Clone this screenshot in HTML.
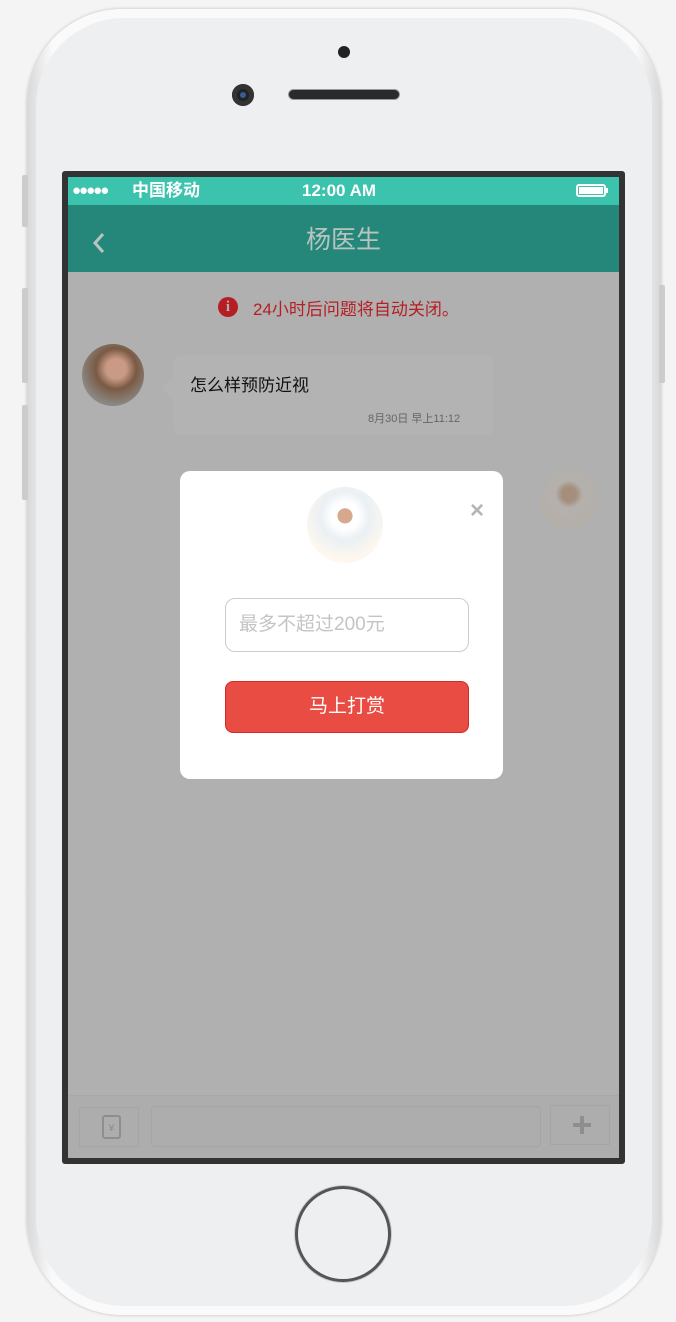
<!DOCTYPE html><html><head><meta charset="utf-8"><style>
body{margin:0;width:676px;height:1322px;background:#f4f4f4;position:relative;overflow:hidden;font-family:"Liberation Sans","Noto Sans CJK SC",sans-serif}
.a{position:absolute}
</style></head><body>
<div class="a" style="left:27px;top:9px;width:634px;height:1306px;border-radius:95px;background:linear-gradient(90deg,#d8d8da,#fafafa 4%,#fafafa 96%,#d8d8da);box-shadow:0 0 3px #bbb"></div>
<div class="a" style="left:36px;top:18px;width:616px;height:1288px;border-radius:88px;background:#eeeff1"></div>
<div class="a" style="left:22px;top:175px;width:6px;height:52px;background:#ccc;border-radius:2px"></div>
<div class="a" style="left:22px;top:288px;width:6px;height:95px;background:#ccc;border-radius:2px"></div>
<div class="a" style="left:22px;top:405px;width:6px;height:95px;background:#ccc;border-radius:2px"></div>
<div class="a" style="left:659px;top:285px;width:6px;height:98px;background:#ccc;border-radius:2px"></div>
<div class="a" style="left:338px;top:46px;width:12px;height:12px;border-radius:50%;background:#222"></div>
<div class="a" style="left:232px;top:84px;width:22px;height:22px;border-radius:50%;background:#222;box-shadow:inset 0 0 0 5px #333"><div class="a" style="left:8px;top:8px;width:6px;height:6px;border-radius:50%;background:#3a5a9a"></div></div>
<div class="a" style="left:288px;top:89px;width:112px;height:11px;border-radius:6px;background:#2a2a2a;border:1px solid #999;box-sizing:border-box"></div>
<div class="a" style="left:62px;top:171px;width:563px;height:993px;background:#333;border-radius:3px"></div>
<div class="a" style="left:68px;top:177px;width:551px;height:981px;background:#b0b0b0;overflow:hidden">
 <div class="a" style="left:0;top:0;width:551px;height:28px;background:#3bc3ae;color:#fff;font-size:17px;line-height:28px;font-weight:bold">
  <span class="a" style="left:4px;font-size:15px;letter-spacing:-2px">●●●●●</span>
  <span class="a" style="left:64px">中国移动</span>
  <span class="a" style="left:234px">12:00 AM</span>
  <div class="a" style="left:508px;top:7px;width:30px;height:13px;border:2px solid #fff;border-radius:3px;box-sizing:border-box;padding:1px"><div style="background:#fff;height:100%"></div></div>
  <div class="a" style="left:538px;top:11px;width:2px;height:5px;background:#fff"></div>
 </div>
 <div class="a" style="left:0;top:28px;width:551px;height:67px;background:#24877a;color:#b9c4c1;text-align:center;font-size:25px;line-height:70px">杨医生
  <svg class="a" style="left:24px;top:27px" width="14" height="24"><path d="M11 2L3 11L11 20" stroke="#b9c4c1" stroke-width="3" fill="none"/></svg></div>
 <div class="a" style="left:150px;top:120px;width:20px;height:20px;border-radius:50%;background:#b51f24;color:#b0b0b0;font:bold 15px/20px 'Liberation Serif';text-align:center">i</div>
 <div class="a" style="left:185px;top:118px;color:#b51f24;font-size:17px">24小时后问题将自动关闭。</div>
 <div class="a" style="left:14px;top:167px;width:62px;height:62px;border-radius:50%;background:radial-gradient(circle at 55% 40%,#c99a86 0 20%,#7a5a44 40%,#8a8680 70%)"></div>
 <div class="a" style="left:106px;top:178px;width:320px;height:80px;background:#b3b3b3;border-radius:6px"></div>
 <div class="a" style="left:94px;top:200px;width:0;height:0;border:12px solid transparent;border-right-color:#b3b3b3;border-left:0"></div>
 <div class="a" style="left:122px;top:194px;font-size:17px;color:#111">怎么样预防近视</div>
 <div class="a" style="left:300px;top:233px;font-size:11px;color:#666">8月30日 早上11:12</div>
 <div class="a" style="left:472px;top:294px;width:58px;height:58px;border-radius:50%;background:radial-gradient(circle at 50% 40%,#a58f7c 0 16%,#b4b0ad 30%,#b3aea5)"></div>
 <div class="a" style="left:0;top:918px;width:551px;height:63px;background:#adadad;border-top:1px solid #a9a9a9"></div>
 <div class="a" style="left:11px;top:930px;width:58px;height:38px;border:1px solid #a5a5a5"></div>
 <div class="a" style="left:83px;top:929px;width:388px;height:39px;border:1px solid #a5a5a5;border-radius:4px"></div>
 <div class="a" style="left:482px;top:928px;width:58px;height:38px;border:1px solid #a5a5a5"></div>
 <div class="a" style="left:34px;top:938px;width:15px;height:20px;border:2px solid #8e8e8e;border-radius:3px;color:#8e8e8e;font-size:10px;text-align:center;line-height:24px">¥</div>
 <div class="a" style="left:505px;top:946px;width:18px;height:4px;background:#8e8e8e"></div>
 <div class="a" style="left:512px;top:939px;width:4px;height:18px;background:#8e8e8e"></div>
</div>
<div class="a" style="left:180px;top:471px;width:323px;height:308px;background:#fff;border-radius:10px">
 <div class="a" style="left:127px;top:16px;width:76px;height:76px;border-radius:50%;background:radial-gradient(circle at 50% 38%,#d6a88c 0 12%,#fff 13% 22%,#eaf0f4 40%,#fdf7ef 70%)"></div>
 <div class="a" style="left:290px;top:30px;color:#b5b5b5;font-size:24px;font-weight:bold;line-height:20px">×</div>
 <div class="a" style="left:45px;top:127px;width:244px;height:54px;border:1px solid #ccc;border-radius:10px;box-sizing:border-box;color:#c4c4c4;font-size:19px;line-height:52px;padding-left:13px">最多不超过200元</div>
 <div class="a" style="left:45px;top:210px;width:244px;height:52px;border:1px solid #d42a28;border-radius:8px;box-sizing:border-box;background:#e84c43;color:#fff;font-size:19px;line-height:50px;text-align:center">马上打赏</div>
</div>
<div class="a" style="left:295px;top:1186px;width:96px;height:96px;border-radius:50%;border:3px solid #555;box-sizing:border-box;background:#eeeff1;box-shadow:0 0 0 1px #ccc"></div>
</body></html>
